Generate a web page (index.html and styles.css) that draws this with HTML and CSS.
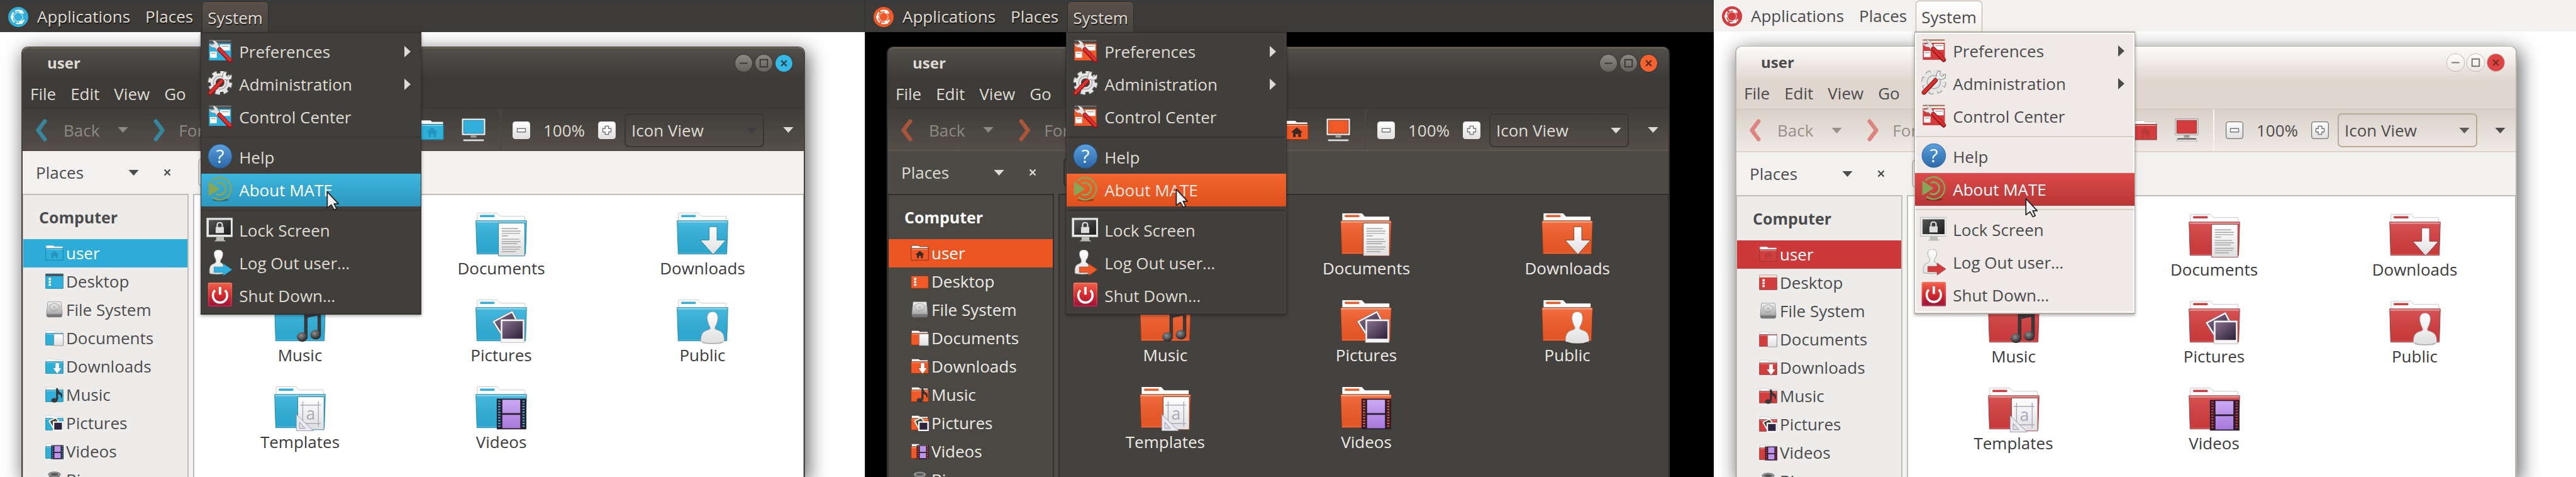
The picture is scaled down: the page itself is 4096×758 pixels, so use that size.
FILE: index.html
```html
<!DOCTYPE html>
<html lang="en">
<head>
<meta charset="utf-8">
<title>MATE desktop themes</title>
<link rel="stylesheet" href="styles.css">
</head>
<body>
<svg class="sprite" aria-hidden="true">
  <defs>
    <linearGradient id="sheen" x1="0" y1="0" x2="0" y2="1"><stop offset="0" stop-color="#fff" stop-opacity=".12"/><stop offset="1" stop-color="#000" stop-opacity=".06"/></linearGradient>
    <linearGradient id="paper" x1="0" y1="0" x2="0" y2="1"><stop offset="0" stop-color="#fff"/><stop offset="1" stop-color="#dfdfdf"/></linearGradient>
    <linearGradient id="photo" x1="0" y1="0" x2="1" y2="1"><stop offset="0" stop-color="#86708c"/><stop offset="1" stop-color="#2d2038"/></linearGradient>
    <linearGradient id="film" x1="0" y1="0" x2="0" y2="1"><stop offset="0" stop-color="#cba9f5"/><stop offset="1" stop-color="#a878dc"/></linearGradient>
    <linearGradient id="blue" x1="0" y1="0" x2="0" y2="1"><stop offset="0" stop-color="#5aa0dc"/><stop offset="1" stop-color="#2a68a8"/></linearGradient>
    <linearGradient id="red" x1="0" y1="0" x2="0" y2="1"><stop offset="0" stop-color="#f0644c"/><stop offset=".5" stop-color="#d9292c"/><stop offset="1" stop-color="#98123a"/></linearGradient>
    <linearGradient id="screen" x1="0" y1="0" x2="1" y2="1"><stop offset="0" stop-color="#555"/><stop offset="1" stop-color="#1c1c1c"/></linearGradient>
    <linearGradient id="metal" x1="0" y1="0" x2="0" y2="1"><stop offset="0" stop-color="#f4f4f4"/><stop offset="1" stop-color="#a8a8a8"/></linearGradient>
    <radialGradient id="ball" cx=".4" cy=".35" r=".6"><stop offset="0" stop-color="#909090"/><stop offset="1" stop-color="#2c2c2c"/></radialGradient>
  </defs>
  <symbol id="logo" viewBox="0 0 36 36">
    <circle cx="18" cy="18" r="18" fill="var(--accent)"/>
    <g fill="none" stroke="#fff"><circle cx="18" cy="18" r="11.5" stroke-width="2.6" stroke-dasharray="17 3 20 3 17 12.2" stroke-dashoffset="-5"/><circle cx="18" cy="18" r="8" stroke-width="1.4" opacity=".7"/></g>
    <g fill="#fff"><circle cx="7" cy="18" r="2.6"/><circle cx="23" cy="8.5" r="3"/><circle cx="23" cy="27.500" r="3"/></g>
  </symbol>
  <symbol id="folder" viewBox="0 0 92 80">
    <path d="M3 16V2Q3 .5 4.500 .5H37Q39 .5 40 2L44 6.500H87Q88.500 6.500 88.500 8V16Z" fill="#fff" stroke="var(--paper-edge)"/>
    <path d="M8 4H34V8H8Z" fill="var(--accent)"/>
    <path d="M.5 14.500H91.500L89.500 74H2.500Z" fill="var(--folder)"/>
    <path d="M.5 14.500H91.500L89.500 74H2.500Z" fill="url(#sheen)" stroke="var(--edge)"/>
    <path d="M1.500 16.500H90.500" stroke="#fff" stroke-opacity=".5" stroke-width="2"/>
    <path d="M3 72.500H89" stroke="#fff" stroke-opacity=".3"/>
  </symbol>
  <symbol id="documents" viewBox="0 0 92 80">
    <use href="#folder"/>
    <path d="M41 18.500H88V77.500H41Z" fill="url(#paper)" stroke="var(--edge)"/>
    <path d="M47 28.500H76M47 33H81M47 37H80M47 41.500H58M47 47.500H78M47 51.500H81M47 55.500H75M47 61.500H81M47 65.500H79M47 69.500H72" stroke="#a4a4a4" stroke-width="1.600"/>
  </symbol>
  <symbol id="downloads" viewBox="0 0 92 80">
    <use href="#folder"/>
    <path d="M58 25H72V49H88L65 75L42 49H58Z" fill="url(#paper)" stroke="var(--edge)"/>
  </symbol>
  <symbol id="music" viewBox="0 0 92 80">
    <use href="#folder"/>
    <path d="M54 20L83 14V62H78V28L59 32V68H54Z" fill="#3a3a3a" stroke="#222" stroke-width=".8"/>
    <ellipse cx="50" cy="67" rx="9.500" ry="8.500" fill="url(#ball)"/><ellipse cx="74" cy="63" rx="9.500" ry="8.500" fill="url(#ball)"/>
  </symbol>
  <symbol id="pictures" viewBox="0 0 92 80">
    <use href="#folder"/>
    <path d="M30 39L66 20L80 46L47 66Z" fill="#fff" stroke="#555" stroke-width=".6"/><path d="M34 40L65 24L76 46L47 60Z" fill="url(#photo)"/>
    <path d="M45 35.500H87.500V77H45Z" fill="#f6f6f6" stroke="#999" stroke-width=".7"/><path d="M48 38.500H84.500V70H48Z" fill="url(#photo)"/>
  </symbol>
  <symbol id="public" viewBox="0 0 92 80">
    <use href="#folder"/>
    <ellipse cx="64" cy="77" rx="19" ry="3" fill="#000" opacity=".25"/>
    <path d="M64 22C75 22 75 34 71 44Q69 48 68 51Q68 54 74 55Q86 58 85 75Q75 79 64 78.500Q53 79 43 75Q42 58 54 55Q60 54 60 51Q59 48 57 44C53 34 53 22 64 22Z" fill="url(#paper)" stroke="#999" stroke-width=".8"/>
  </symbol>
  <symbol id="templates" viewBox="0 0 92 80">
    <use href="#folder"/>
    <path d="M42 18.500H89V77.500H42Z" fill="url(#paper)" stroke="var(--edge)"/>
    <path d="M51 27V72M79 27V72M46 33.500H83M46 66.500H83" stroke="#a9a9bb" stroke-width="1.600"/>
    <text x="65" y="60" text-anchor="middle" class="glyph-a">a</text>
    <path d="M39.500 50V79.500H70ZM45 64L55 75H45Z" fill="#e9e9f0" fill-rule="evenodd" stroke="#8e8ea2"/>
  </symbol>
  <symbol id="videos" viewBox="0 0 92 80">
    <use href="#folder"/>
    <path d="M38 22H91V77H38Z" fill="#2b1d2c"/>
    <path d="M42.500 25V75M86 25V75" stroke="var(--accent)" stroke-width="4" stroke-dasharray="2.500 2.500"/>
    <path d="M48 24H80V48H48ZM48 51H80V75H48Z" fill="url(#film)"/>
  </symbol>
  <symbol id="s-folder" viewBox="0 0 32 28">
    <path d="M1.500 8V1H14L16 3H30.500V8Z" fill="#fff" stroke="var(--paper-edge)" stroke-width=".8"/>
    <path d="M.8 6H31.200V26.500H.8Z" fill="var(--folder)" stroke="var(--edge)"/><path d="M1.500 7.500H30.500" stroke="#fff" stroke-opacity=".5"/>
  </symbol>
  <symbol id="s-home" viewBox="0 0 32 28"><use href="#s-folder"/><path d="M16 10L24 17H21.500V23H18V19H14.500V23H11V17H8Z" fill="var(--home-glyph)"/></symbol>
  <symbol id="s-desktop" viewBox="0 0 32 28"><path d="M.8 1H31.200V26.500H.8Z" fill="var(--folder)" stroke="var(--edge)"/><path d="M.5 1H31.500V5H.5Z" fill="var(--bar)"/><path d="M6 8H10V12H6ZM6 13.500H10V17H6ZM6 18.500H10V22H6Z" fill="#fff"/></symbol>
  <symbol id="s-disk" viewBox="0 0 32 32"><path d="M3 1H29L31.500 24V28Q31 31 28 31H4Q1 31 .5 28V24Z" fill="#777"/><path d="M3 1H29L31.500 25H.5Z" fill="url(#metal)" stroke="#8a8a8a" stroke-width=".8"/><ellipse cx="16" cy="11" rx="10" ry="7" fill="none" stroke="#aaa" stroke-width="1.500"/><circle cx="16" cy="11" r="2.500" fill="#bbb"/><path d="M20 16L12 21" stroke="#aaa" stroke-width="2"/></symbol>
  <symbol id="s-documents" viewBox="0 0 32 28"><use href="#s-folder"/><path d="M15 7H31.500V27.500H15Z" fill="url(#paper)" stroke="#777" stroke-width=".7"/></symbol>
  <symbol id="s-downloads" viewBox="0 0 32 28"><use href="#s-folder"/><path d="M17.500 8H24.500V17H29L21 27.500L13 17H17.500Z" fill="#fff" stroke="var(--edge)" stroke-width=".7"/></symbol>
  <symbol id="s-music" viewBox="0 0 32 28"><use href="#s-folder"/><path d="M19 3L22 3Q23 9 29 12Q31 17 28 21Q28 14 22.500 13V23H19Z" fill="#333"/><ellipse cx="16" cy="24" rx="5.500" ry="4" fill="#3a3a3a"/></symbol>
  <symbol id="s-pictures" viewBox="0 0 32 28"><use href="#s-folder"/><path d="M7 11L18 5L24 12L14 23Z" fill="#443" stroke="#fff" stroke-width="2"/><path d="M14.500 12.500H30.500V27H14.500Z" fill="#2f2440" stroke="#fff" stroke-width="2.500"/></symbol>
  <symbol id="s-videos" viewBox="0 0 32 28"><use href="#s-folder"/><path d="M10.500 3.500H32V28H10.500Z" fill="#2b1d2c"/><path d="M13 5V27M29.700 5V27" stroke="var(--accent)" stroke-width="2" stroke-dasharray="2 2"/><path d="M16 5H27V15H16ZM16 17H27V26H16Z" fill="#bd94ec"/></symbol>
  <symbol id="s-bin" viewBox="0 0 32 32"><path d="M5 5L8 30H24L27 5Z" fill="#777"/><ellipse cx="16" cy="6" rx="12" ry="5" fill="#999" stroke="#666"/><ellipse cx="16" cy="6" rx="8" ry="2.500" fill="#555"/></symbol>
  <symbol id="m-control" viewBox="0 0 48 48">
    <path d="M5 3H45V40H5Z" fill="var(--bar)"/><path d="M5 4H45" stroke="var(--bar-line)" stroke-width="2"/><path d="M5 9H45V40H5Z" fill="var(--accent)"/>
    <path d="M25 11H43V22H25ZM7 24H19V35H7Z" fill="#fff"/><path d="M28 14.500H41M9 27H17" stroke="#999" stroke-width="1.500"/>
    <path d="M11 3Q20 4 22 12L27 19L21 23L16 17Q6 17 5 9L9 12L15 10Z" fill="#e4e4e4" stroke="#777" stroke-width=".7"/>
    <path d="M24 20L43 40" stroke="#8e1212" stroke-width="8" stroke-linecap="round"/><path d="M24 19.500L43 39" stroke="#d93030" stroke-width="5.500" stroke-linecap="round"/>
  </symbol>
  <symbol id="m-admin" viewBox="0 0 48 48">
    <circle cx="25" cy="21" r="18.500" fill="none" stroke="#8b8b8b" stroke-width="8" stroke-dasharray="8.500 6.030"/><circle cx="25" cy="21" r="18" fill="none" stroke="#e6e6e6" stroke-width="6.500" stroke-dasharray="7.500 6.637"/>
    <circle cx="25" cy="21" r="12.500" fill="none" stroke="#e6e6e6" stroke-width="9"/><circle cx="25" cy="21" r="12" fill="none" stroke="#b4b4b4" stroke-width="2"/>
    <path d="M37 1L36 8L40 11L46 6Q48 14 41 16Q37 17 34 15L29 20L25 16L30 10Q29 1 37 1Z" fill="#eee" stroke="#777" stroke-width="1"/>
    <path d="M7 40L28 18" stroke="#8e1212" stroke-width="8" stroke-linecap="round"/><path d="M7 39.500L28 17.500" stroke="#d93030" stroke-width="5.500" stroke-linecap="round"/>
  </symbol>
  <symbol id="m-help" viewBox="0 0 48 48"><circle cx="25" cy="22" r="21.500" fill="url(#blue)" stroke="#2b5f9e"/><text x="25" y="34" text-anchor="middle" class="glyph-q">?</text></symbol>
  <symbol id="m-mate" viewBox="0 0 48 48"><ellipse cx="26" cy="42" rx="15" ry="2.500" fill="#000" opacity=".3"/><g fill="none" stroke="#87a556"><path d="M10 8A20 20 0 1 1 12 37" stroke-width="3"/><path d="M19 12A11 11 0 1 1 18 31" stroke-width="3.500"/></g><path d="M4 8L25 22L4 35Z" fill="#87a556"/></symbol>
  <symbol id="m-lock" viewBox="0 0 48 48"><path d="M18 36H32V41L36 44H14L18 41Z" fill="#bbb"/><path d="M.5 1.500H48V36H.5Z" fill="#e8e8e8" stroke="#aaa" stroke-width=".8"/><path d="M4.500 5H44.500V32H4.500Z" fill="url(#screen)"/><path d="M17 18H32V29H17Z" fill="#ddd"/><path d="M20 19V14Q20 10 24.500 10Q29 10 29 14V19" fill="none" stroke="#ddd" stroke-width="2.500"/></symbol>
  <symbol id="m-logout" viewBox="0 -3 48 48"><path d="M22-3C31-3 32 5 28 13Q25 16 26 20Q34 22 33 40Q20 43 6 40Q4 24 14 22Q19 20 17 14C12 5 13-3 22-3Z" fill="url(#paper)" stroke="#888" stroke-width=".8"/><path d="M14 28H31V22L47 33L31 44V38H14Z" fill="var(--accent)" stroke="var(--edge)" stroke-width=".7"/></symbol>
  <symbol id="m-power" viewBox="0 0 48 48"><rect x="3" y="0" width="44" height="44" rx="3" fill="url(#red)"/><rect x="4.500" y="1.500" width="41" height="41" rx="2" fill="none" stroke="#fff" stroke-opacity=".25"/><path d="M16 14A13 13 0 1 0 34 14" fill="none" stroke="#fff" stroke-width="4"/><path d="M25 8V22" stroke="#fff" stroke-width="4.500"/></symbol>
  <symbol id="t-computer" viewBox="0 0 42 42"><path d="M1 1H41V29H1Z" fill="#f5f5f5" stroke="var(--screen-edge)"/><path d="M3.500 3.500H38.500V26.500H3.500Z" fill="var(--accent)" stroke="var(--edge)"/><path d="M16 29H26V34H16Z" fill="#999"/><path d="M5 35H37L40 40H2Z" fill="#444"/><path d="M3 38.500H39" stroke="#ddd" stroke-width="3"/></symbol>
  <symbol id="t-minus" viewBox="0 0 30 30"><rect x=".7" y=".7" width="28.600" height="28.600" rx="4" fill="url(#paper)" stroke="var(--zoom-edge)" stroke-width="1.400"/><path d="M8 12H22V18H8Z" fill="#fff" stroke="#777" stroke-width="1.500"/></symbol>
  <symbol id="t-plus" viewBox="0 0 30 30"><rect x=".7" y=".7" width="28.600" height="28.600" rx="4" fill="url(#paper)" stroke="var(--zoom-edge)" stroke-width="1.400"/><path d="M12 8H18V12H22V18H18V22H12V18H8V12H12Z" fill="#fff" stroke="#777" stroke-width="1.500"/></symbol>
  <symbol id="t-back" viewBox="0 0 22 40"><path d="M18 4L6 20L18 36" fill="none" stroke="var(--nav)" stroke-width="7" stroke-linecap="round" stroke-linejoin="round"/></symbol>
  <symbol id="t-forward" viewBox="0 0 22 40"><path d="M4 4L16 20L4 36" fill="none" stroke="var(--nav)" stroke-width="7" stroke-linecap="round" stroke-linejoin="round"/></symbol>
  <symbol id="caret" viewBox="0 0 18 10"><path d="M0 0H18L9 10Z" fill="currentColor"/></symbol>
  <symbol id="caret-right" viewBox="0 0 10 18"><path d="M0 0V18L10 9Z" fill="currentColor"/></symbol>
  <symbol id="w-min" viewBox="0 0 28 28"><path d="M7.500 14H20.500" stroke="currentColor" stroke-width="2"/></symbol>
  <symbol id="w-max" viewBox="0 0 28 28"><path d="M8 8H20V20H8Z" fill="none" stroke="currentColor" stroke-width="2"/></symbol>
  <symbol id="w-close" viewBox="0 0 28 28"><path d="M9.500 9.500L18.500 18.500M18.500 9.500L9.500 18.500" stroke="currentColor" stroke-width="2.400"/></symbol>
  <symbol id="cursor" viewBox="0 0 24 36"><path d="M1.500 1.500L22 23.500H14L18.500 32.500L14 34.500L9 25.500L1.500 31Z" fill="#eee" stroke="#222" stroke-width="2" stroke-linejoin="round"/></symbol>
</svg>

<section class="desktop theme-aqua" aria-label="Aqua theme">
  <header class="panel">
    <svg class="logo"><use href="#logo"/></svg>
    <button class="panel-item">Applications</button>
    <button class="panel-item">Places</button>
    <div class="system">
      <button class="panel-item open">System</button>
      <div class="menu">
        <button class="menu-item"><svg><use href="#m-control"/></svg>Preferences<svg class="more"><use href="#caret-right"/></svg></button>
        <button class="menu-item"><svg><use href="#m-admin"/></svg>Administration<svg class="more"><use href="#caret-right"/></svg></button>
        <button class="menu-item"><svg><use href="#m-control"/></svg>Control Center</button>
        <hr>
        <button class="menu-item"><svg><use href="#m-help"/></svg>Help</button>
        <button class="menu-item active"><svg><use href="#m-mate"/></svg>About MATE</button>
        <hr>
        <button class="menu-item"><svg><use href="#m-lock"/></svg>Lock Screen</button>
        <button class="menu-item"><svg><use href="#m-logout"/></svg>Log Out user…</button>
        <button class="menu-item"><svg><use href="#m-power"/></svg>Shut Down…</button>
        <svg class="cursor"><use href="#cursor"/></svg>
      </div>
    </div>
  </header>
  <main class="window">
    <div class="chrome">
      <div class="titlebar">
        <h1>user</h1>
        <button class="win" aria-label="Minimize"><svg><use href="#w-min"/></svg></button>
        <button class="win" aria-label="Maximize"><svg><use href="#w-max"/></svg></button>
        <button class="win close" aria-label="Close"><svg><use href="#w-close"/></svg></button>
      </div>
      <nav class="menubar"><button>File</button><button>Edit</button><button>View</button><button>Go</button><button>Bookmarks</button></nav>
    </div>
    <div class="toolbar">
      <button class="nav" disabled><svg><use href="#t-back"/></svg>Back<svg class="caret"><use href="#caret"/></svg></button>
      <button class="nav" disabled><svg><use href="#t-forward"/></svg>Forward</button>
      <button class="tool home" aria-label="Home"><svg><use href="#s-home"/></svg></button>
      <button class="tool computer" aria-label="Computer"><svg><use href="#t-computer"/></svg></button>
      <div class="zoom">
        <button class="step" aria-label="Zoom out"><svg><use href="#t-minus"/></svg></button>
        <output>100%</output>
        <button class="step" aria-label="Zoom in"><svg><use href="#t-plus"/></svg></button>
      </div>
      <div class="combo"><select aria-label="View mode"><option>Icon View</option></select><svg class="caret"><use href="#caret"/></svg></div>
      <button class="overflow" aria-label="More tools"><svg class="caret"><use href="#caret"/></svg></button>
    </div>
    <div class="columns">
      <aside class="side">
        <div class="side-head"><button class="side-pick">Places<svg class="caret"><use href="#caret"/></svg></button><button class="side-close" aria-label="Close sidebar"><svg><use href="#w-close"/></svg></button></div>
        <div class="side-list">
          <h2>Computer</h2>
          <a href="#" class="place current"><svg><use href="#s-home"/></svg>user</a>
          <a href="#" class="place"><svg><use href="#s-desktop"/></svg>Desktop</a>
          <a href="#" class="place"><svg><use href="#s-disk"/></svg>File System</a>
          <a href="#" class="place"><svg><use href="#s-documents"/></svg>Documents</a>
          <a href="#" class="place"><svg><use href="#s-downloads"/></svg>Downloads</a>
          <a href="#" class="place"><svg><use href="#s-music"/></svg>Music</a>
          <a href="#" class="place"><svg><use href="#s-pictures"/></svg>Pictures</a>
          <a href="#" class="place"><svg><use href="#s-videos"/></svg>Videos</a>
          <a href="#" class="place"><svg><use href="#s-bin"/></svg>Bin</a>
        </div>
      </aside>
      <div class="content">
        <div class="location"><button aria-label="Path"></button></div>
        <div class="files">
          <a href="#" class="file second"><svg><use href="#documents"/></svg>Documents</a>
          <a href="#" class="file"><svg><use href="#downloads"/></svg>Downloads</a>
          <a href="#" class="file"><svg><use href="#music"/></svg>Music</a>
          <a href="#" class="file"><svg><use href="#pictures"/></svg>Pictures</a>
          <a href="#" class="file"><svg><use href="#public"/></svg>Public</a>
          <a href="#" class="file"><svg><use href="#templates"/></svg>Templates</a>
          <a href="#" class="file"><svg><use href="#videos"/></svg>Videos</a>
        </div>
      </div>
    </div>
  </main>
</section>

<section class="desktop theme-orange" aria-label="Orange dark theme">
  <header class="panel">
    <svg class="logo"><use href="#logo"/></svg>
    <button class="panel-item">Applications</button>
    <button class="panel-item">Places</button>
    <div class="system">
      <button class="panel-item open">System</button>
      <div class="menu">
        <button class="menu-item"><svg><use href="#m-control"/></svg>Preferences<svg class="more"><use href="#caret-right"/></svg></button>
        <button class="menu-item"><svg><use href="#m-admin"/></svg>Administration<svg class="more"><use href="#caret-right"/></svg></button>
        <button class="menu-item"><svg><use href="#m-control"/></svg>Control Center</button>
        <hr>
        <button class="menu-item"><svg><use href="#m-help"/></svg>Help</button>
        <button class="menu-item active"><svg><use href="#m-mate"/></svg>About MATE</button>
        <hr>
        <button class="menu-item"><svg><use href="#m-lock"/></svg>Lock Screen</button>
        <button class="menu-item"><svg><use href="#m-logout"/></svg>Log Out user…</button>
        <button class="menu-item"><svg><use href="#m-power"/></svg>Shut Down…</button>
        <svg class="cursor"><use href="#cursor"/></svg>
      </div>
    </div>
  </header>
  <main class="window">
    <div class="chrome">
      <div class="titlebar">
        <h1>user</h1>
        <button class="win" aria-label="Minimize"><svg><use href="#w-min"/></svg></button>
        <button class="win" aria-label="Maximize"><svg><use href="#w-max"/></svg></button>
        <button class="win close" aria-label="Close"><svg><use href="#w-close"/></svg></button>
      </div>
      <nav class="menubar"><button>File</button><button>Edit</button><button>View</button><button>Go</button><button>Bookmarks</button></nav>
    </div>
    <div class="toolbar">
      <button class="nav" disabled><svg><use href="#t-back"/></svg>Back<svg class="caret"><use href="#caret"/></svg></button>
      <button class="nav" disabled><svg><use href="#t-forward"/></svg>Forward</button>
      <button class="tool home" aria-label="Home"><svg><use href="#s-home"/></svg></button>
      <button class="tool computer" aria-label="Computer"><svg><use href="#t-computer"/></svg></button>
      <div class="zoom">
        <button class="step" aria-label="Zoom out"><svg><use href="#t-minus"/></svg></button>
        <output>100%</output>
        <button class="step" aria-label="Zoom in"><svg><use href="#t-plus"/></svg></button>
      </div>
      <div class="combo"><select aria-label="View mode"><option>Icon View</option></select><svg class="caret"><use href="#caret"/></svg></div>
      <button class="overflow" aria-label="More tools"><svg class="caret"><use href="#caret"/></svg></button>
    </div>
    <div class="columns">
      <aside class="side">
        <div class="side-head"><button class="side-pick">Places<svg class="caret"><use href="#caret"/></svg></button><button class="side-close" aria-label="Close sidebar"><svg><use href="#w-close"/></svg></button></div>
        <div class="side-list">
          <h2>Computer</h2>
          <a href="#" class="place current"><svg><use href="#s-home"/></svg>user</a>
          <a href="#" class="place"><svg><use href="#s-desktop"/></svg>Desktop</a>
          <a href="#" class="place"><svg><use href="#s-disk"/></svg>File System</a>
          <a href="#" class="place"><svg><use href="#s-documents"/></svg>Documents</a>
          <a href="#" class="place"><svg><use href="#s-downloads"/></svg>Downloads</a>
          <a href="#" class="place"><svg><use href="#s-music"/></svg>Music</a>
          <a href="#" class="place"><svg><use href="#s-pictures"/></svg>Pictures</a>
          <a href="#" class="place"><svg><use href="#s-videos"/></svg>Videos</a>
          <a href="#" class="place"><svg><use href="#s-bin"/></svg>Bin</a>
        </div>
      </aside>
      <div class="content">
        <div class="location"><button aria-label="Path"></button></div>
        <div class="files">
          <a href="#" class="file second"><svg><use href="#documents"/></svg>Documents</a>
          <a href="#" class="file"><svg><use href="#downloads"/></svg>Downloads</a>
          <a href="#" class="file"><svg><use href="#music"/></svg>Music</a>
          <a href="#" class="file"><svg><use href="#pictures"/></svg>Pictures</a>
          <a href="#" class="file"><svg><use href="#public"/></svg>Public</a>
          <a href="#" class="file"><svg><use href="#templates"/></svg>Templates</a>
          <a href="#" class="file"><svg><use href="#videos"/></svg>Videos</a>
        </div>
      </div>
    </div>
  </main>
</section>

<section class="desktop theme-ruby" aria-label="Ruby light theme">
  <header class="panel">
    <svg class="logo"><use href="#logo"/></svg>
    <button class="panel-item">Applications</button>
    <button class="panel-item">Places</button>
    <div class="system">
      <button class="panel-item open">System</button>
      <div class="menu">
        <button class="menu-item"><svg><use href="#m-control"/></svg>Preferences<svg class="more"><use href="#caret-right"/></svg></button>
        <button class="menu-item"><svg><use href="#m-admin"/></svg>Administration<svg class="more"><use href="#caret-right"/></svg></button>
        <button class="menu-item"><svg><use href="#m-control"/></svg>Control Center</button>
        <hr>
        <button class="menu-item"><svg><use href="#m-help"/></svg>Help</button>
        <button class="menu-item active"><svg><use href="#m-mate"/></svg>About MATE</button>
        <hr>
        <button class="menu-item"><svg><use href="#m-lock"/></svg>Lock Screen</button>
        <button class="menu-item"><svg><use href="#m-logout"/></svg>Log Out user…</button>
        <button class="menu-item"><svg><use href="#m-power"/></svg>Shut Down…</button>
        <svg class="cursor"><use href="#cursor"/></svg>
      </div>
    </div>
  </header>
  <main class="window">
    <div class="chrome">
      <div class="titlebar">
        <h1>user</h1>
        <button class="win" aria-label="Minimize"><svg><use href="#w-min"/></svg></button>
        <button class="win" aria-label="Maximize"><svg><use href="#w-max"/></svg></button>
        <button class="win close" aria-label="Close"><svg><use href="#w-close"/></svg></button>
      </div>
      <nav class="menubar"><button>File</button><button>Edit</button><button>View</button><button>Go</button><button>Bookmarks</button></nav>
    </div>
    <div class="toolbar">
      <button class="nav" disabled><svg><use href="#t-back"/></svg>Back<svg class="caret"><use href="#caret"/></svg></button>
      <button class="nav" disabled><svg><use href="#t-forward"/></svg>Forward</button>
      <button class="tool home" aria-label="Home"><svg><use href="#s-home"/></svg></button>
      <button class="tool computer" aria-label="Computer"><svg><use href="#t-computer"/></svg></button>
      <div class="zoom">
        <button class="step" aria-label="Zoom out"><svg><use href="#t-minus"/></svg></button>
        <output>100%</output>
        <button class="step" aria-label="Zoom in"><svg><use href="#t-plus"/></svg></button>
      </div>
      <div class="combo"><select aria-label="View mode"><option>Icon View</option></select><svg class="caret"><use href="#caret"/></svg></div>
      <button class="overflow" aria-label="More tools"><svg class="caret"><use href="#caret"/></svg></button>
    </div>
    <div class="columns">
      <aside class="side">
        <div class="side-head"><button class="side-pick">Places<svg class="caret"><use href="#caret"/></svg></button><button class="side-close" aria-label="Close sidebar"><svg><use href="#w-close"/></svg></button></div>
        <div class="side-list">
          <h2>Computer</h2>
          <a href="#" class="place current"><svg><use href="#s-home"/></svg>user</a>
          <a href="#" class="place"><svg><use href="#s-desktop"/></svg>Desktop</a>
          <a href="#" class="place"><svg><use href="#s-disk"/></svg>File System</a>
          <a href="#" class="place"><svg><use href="#s-documents"/></svg>Documents</a>
          <a href="#" class="place"><svg><use href="#s-downloads"/></svg>Downloads</a>
          <a href="#" class="place"><svg><use href="#s-music"/></svg>Music</a>
          <a href="#" class="place"><svg><use href="#s-pictures"/></svg>Pictures</a>
          <a href="#" class="place"><svg><use href="#s-videos"/></svg>Videos</a>
          <a href="#" class="place"><svg><use href="#s-bin"/></svg>Bin</a>
        </div>
      </aside>
      <div class="content">
        <div class="location"><button aria-label="Path"></button></div>
        <div class="files">
          <a href="#" class="file second"><svg><use href="#documents"/></svg>Documents</a>
          <a href="#" class="file"><svg><use href="#downloads"/></svg>Downloads</a>
          <a href="#" class="file"><svg><use href="#music"/></svg>Music</a>
          <a href="#" class="file"><svg><use href="#pictures"/></svg>Pictures</a>
          <a href="#" class="file"><svg><use href="#public"/></svg>Public</a>
          <a href="#" class="file"><svg><use href="#templates"/></svg>Templates</a>
          <a href="#" class="file"><svg><use href="#videos"/></svg>Videos</a>
        </div>
      </div>
    </div>
  </main>
</section>
</body>
</html>
```
FILE: styles.css
```css
* { box-sizing: border-box; }

body {
  margin: 0;
  height: 100vh;
  overflow: hidden;
  display: grid;
  grid-template-columns: 1375fr 1350fr 1371fr;
  font-family: "Open Sans", "Noto Sans", sans-serif;
  font-size: 26px;
}

button, select {
  font: inherit;
  color: inherit;
  background: none;
  border: 0;
  margin: 0;
  padding: 0;
}
a { color: inherit; text-decoration: none; }
svg { display: block; flex: none; overflow: visible; }
.sprite { position: absolute; width: 0; height: 0; overflow: hidden; }
.glyph-a { font-size: 30px; fill: #a9a9bb; }
.glyph-q { font-size: 34px; fill: #fff; }

/* Themes */
.theme-aqua {
  --accent: #30b0da; --folder: #2fb0da; --edge: #1b80a0; --paper-edge: #c4c4c4; --screen-edge: #ddd;
  --home-glyph: #2394bb; --bar: #4a5458; --bar-line: #777;
  --desk: #fff; --shadow: 4px 8px 30px 2px rgba(0, 0, 0, .6);
  --panel: #3c3b37; --panel-top: #363b40; --panel-text: #dfdbd2; --text-shadow: 1px 2px 1px #1c1b19;
  --tab: linear-gradient(#5a5049, #474440); --tab-border: #2f2e2b;
  --menu: #413f3b; --menu-border: #34332f; --menu-inner: #413f3b; --menu-text: #dfdbd2; --menu-line: #383733;
  --hot: linear-gradient(#3cb6de, #2d97bd); --hot-text: #fff;
  --frame: #44423e; --frame-top: #6b625b; --title: linear-gradient(#504e49, #3c3b37 50%);
  --tools: linear-gradient(#3f3e3a, #554e49); --tools-line: #45443f; --tools-end: #4b463f;
  --chrome-text: #dfdbd2; --dim: #8d8983; --nav: #38869c; --zoom-edge: #e4e4e4;
  --combo: #393733; --combo-caret: #3d3d42; --sep: #4b4843;
  --head: #f2f1f0; --head-text: #4c4c4c; --side: #edeceb; --side-text: #4c4c4c; --side-title: #4c4c4c;
  --line: #c4bcb7; --pick: #2cacd6; --files: #fff; --file-text: #3c3c3c;
  --win: linear-gradient(#8b8984, #64625d); --win-edge: #383733; --win-text: #3a3936; --close: #35b9e4; --close-text: #274650;
}
.theme-orange {
  --accent: #f05a28; --folder: #f15a26; --edge: #7e3215; --paper-edge: #35332f; --screen-edge: #ddd;
  --home-glyph: #3a2a22; --bar: #4a4843; --bar-line: #77736c;
  --desk: #000; --shadow: none;
  --panel: #3c3b37; --panel-top: #363b40; --panel-text: #dfdbd2; --text-shadow: 1px 2px 1px #1c1b19;
  --tab: linear-gradient(#5a5049, #474440); --tab-border: #2f2e2b;
  --menu: #413f3b; --menu-border: #34332f; --menu-inner: #45433f; --menu-text: #dfdbd2; --menu-line: #32312d;
  --hot: linear-gradient(#f4652f, #df4f1d); --hot-text: #f4e7df;
  --frame: #34332f; --frame-top: #6b625b; --title: linear-gradient(#504e49, #3c3b37 50%);
  --tools: linear-gradient(#3f3e3a, #554e49); --tools-line: #45443f; --tools-end: #625850;
  --chrome-text: #dfdbd2; --dim: #8d8983; --nav: #a8553a; --zoom-edge: #e4e4e4;
  --combo: #393733; --combo-caret: #dfdbd2; --sep: #4b4843;
  --head: #4d4b46; --head-text: #dfdbd2; --side: #4a4843; --side-text: #eceae5; --side-title: #fff;
  --line: #302f2b; --pick: #eb5521; --files: #44423e; --file-text: #eceae5;
  --win: linear-gradient(#8b8984, #64625d); --win-edge: #383733; --win-text: #3a3936; --close: #f4622f; --close-text: #5f2a18;
}
.theme-ruby {
  --accent: #d43b3c; --folder: #d43d3e; --edge: #8e3a3a; --paper-edge: #bcbcbc; --screen-edge: #888;
  --home-glyph: #b83a3a; --bar: #efe8dc; --bar-line: #8f5c4c;
  --desk: #fff; --shadow: 4px 8px 30px 2px rgba(0, 0, 0, .6);
  --panel: #f2f1f0; --panel-top: #f2f1f0; --panel-text: #4c4c4c; --text-shadow: none;
  --tab: linear-gradient(#fff, #f3efec); --tab-border: #b9aa96;
  --menu: #efeae7; --menu-border: #b5aca0; --menu-inner: #fff; --menu-text: #4c4c4c; --menu-line: #d5cec6;
  --hot: linear-gradient(#dc4949, #b73636); --hot-text: #fff;
  --frame: #bab1a8; --frame-top: #fff; --title: linear-gradient(#fbfaf9, #dfd6cf 55%);
  --tools: linear-gradient(#d9d0c8, #efeae6); --tools-line: #d0c6bd; --tools-end: #ddd3c6;
  --chrome-text: #4c4c4c; --dim: #979088; --nav: #dd8380; --zoom-edge: #777;
  --combo: #b9aa98; --combo-caret: #5a5a5a; --sep: #f7f5f2;
  --head: #f2f1f0; --head-text: #4c4c4c; --side: #edeceb; --side-text: #4c4c4c; --side-title: #4c4c4c;
  --line: #c0bcb9; --pick: #cd3838; --files: #fff; --file-text: #3c3c3c;
  --win: linear-gradient(#fefefe, #ece7e3); --win-edge: #c5bbb1; --win-text: #7d7468; --close: #de4346; --close-text: #7c2f22;
}

.desktop {
  display: flex;
  flex-direction: column;
  min-width: 0;
  height: 100vh;
  overflow: hidden;
  background: var(--desk);
}
.theme-orange { border-left: 1px solid #2b3038; }

/* Top panel */
.panel {
  position: relative;
  z-index: 2;
  flex: none;
  display: flex;
  align-items: stretch;
  height: 51px;
  padding-left: 13px;
  color: var(--panel-text);
  background: var(--panel);
  border-top: 2px solid var(--panel-top);
}
.theme-ruby .panel { height: 50px; border-top-width: 1px; }
.logo { width: 32px; height: 32px; align-self: center; margin-right: 2px; }
.panel-item { padding: 0 12px 2px; text-shadow: var(--text-shadow); }
.system { position: relative; display: flex; margin-left: 2px; }
.panel-item.open {
  padding: 1px 8px 0;
  background: var(--tab);
  border: 1px solid var(--tab-border);
  border-bottom: 0;
  border-radius: 6px 6px 0 0;
}

/* System menu */
.menu {
  position: absolute;
  top: 100%;
  left: -2px;
  width: 351px;
  padding: 3px 0 2px;
  color: var(--menu-text);
  background: var(--menu);
  border: 1px solid var(--menu-border);
  border-width: 2px 1px;
  box-shadow: inset 0 0 0 2px var(--menu-inner), 0 2px 5px rgba(0, 0, 0, .35);
}
.menu-item {
  display: flex;
  align-items: center;
  gap: 10px;
  width: 100%;
  height: 52px;
  padding: 0 16px 0 8px;
  text-align: left;
}
.menu-item svg { width: 42px; height: 42px; }
.menu-item .more { width: 10px; height: 18px; margin-left: auto; }
.menu-item.active { color: var(--hot-text); background: var(--hot); }
.menu hr { height: 2px; margin: 5px 1px; border: 0; background: var(--menu-line); }
.menu .cursor { position: absolute; left: 199px; top: 250px; width: 21px; height: 32px; }
.theme-orange .cursor { left: 173px; top: 246px; }
.theme-ruby .cursor { left: 175px; top: 262px; }

/* File manager window */
.window {
  flex: 1;
  display: flex;
  flex-direction: column;
  min-height: 0;
  margin: 23px 95px 0 34px;
  border: 1px solid var(--frame);
  border-width: 1px 2px 0;
  border-radius: 10px 10px 0 0;
  background: var(--head);
  box-shadow: var(--shadow);
}
.theme-orange .window { margin-right: 70px; }
.theme-ruby .window { margin-right: 94px; }
.chrome {
  color: var(--chrome-text);
  background: var(--title);
  border-top: 2px solid var(--frame-top);
  border-radius: 9px 9px 0 0;
}
.titlebar {
  display: flex;
  align-items: center;
  gap: 5px;
  height: 47px;
  padding: 0 18px 0 39px;
}
.titlebar h1 { flex: 1; margin: 0; font-size: 24px; font-weight: 700; line-height: 28px; padding-bottom: 2px; }
.win {
  width: 27px;
  height: 27px;
  border-radius: 50%;
  color: var(--win-text);
  background: var(--win);
  box-shadow: 0 0 0 1px var(--win-edge);
}
.win svg { width: 27px; height: 27px; }
.win.close { color: var(--close-text); background: var(--close); }
.menubar { display: flex; gap: 23px; height: 50px; padding-left: 12px; overflow: hidden; }

.toolbar {
  flex: none;
  display: flex;
  align-items: center;
  height: 66px;
  padding: 0 16px 0 19px;
  color: var(--chrome-text);
  background: var(--tools);
  border-top: 1px solid var(--tools-line);
  border-bottom: 2px solid var(--tools-end);
}
.theme-ruby .toolbar { height: 69px; }
.caret { width: 17px; height: 9px; }
.nav { display: flex; align-items: center; color: var(--dim); margin-right: 40px; }
.nav svg { width: 20px; height: 36px; margin-right: 26px; }
.nav .caret { width: 17px; height: 9px; margin: 0 0 0 29px; }
.nav + .nav svg { margin-right: 20px; }
.tool svg { width: 38px; height: 38px; }
.home { margin-left: auto; }
.home svg { height: 34px; }
.computer { margin: 0 23px 0 28px; }
.zoom {
  display: flex;
  align-items: center;
  align-self: stretch;
  gap: 21px;
  padding: 0 14px 0 18px;
  border-left: 2px solid var(--sep);
}
.step svg { width: 28px; height: 28px; }
.combo { position: relative; width: 222px; margin-right: 30px; }
.theme-ruby .combo { margin-right: 28px; }
.combo select {
  appearance: none;
  width: 100%;
  height: 54px;
  padding: 0 9px;
  border: 2px solid var(--combo);
  border-radius: 7px;
}
.combo .caret { position: absolute; right: 12px; top: 23px; color: var(--combo-caret); pointer-events: none; }

.columns {
  flex: 1;
  min-height: 0;
  display: grid;
  grid-template-columns: 264px minmax(0, 1fr);
  gap: 7px;
}
.side, .content { display: flex; flex-direction: column; min-height: 0; }
.side-head, .location { flex: none; height: 68px; display: flex; align-items: center; }
.side-head { padding-left: 21px; color: var(--head-text); }
.side-pick { display: flex; align-items: center; justify-content: space-between; width: 164px; margin-right: 31px; }
.side-close svg { width: 28px; height: 28px; }
.location { padding-left: 8px; }
.location button { width: 180px; height: 46px; border: 2px solid var(--line); border-radius: 7px; }
.side-list {
  flex: 1;
  min-height: 0;
  overflow: hidden;
  color: var(--side-text);
  background: var(--side);
  border: 2px solid var(--line);
  border-width: 2px 2px 0 1px;
}
.side-list h2 { margin: 0; padding-left: 25px; font-size: 25px; font-weight: 700; line-height: 70px; color: var(--side-title); }
.place { display: flex; align-items: center; gap: 4px; height: 45px; padding: 0 0 1px 35px; }
.place svg { width: 29px; height: 26px; }
.place.current { color: #fff; background: var(--pick); }

.files {
  flex: 1;
  min-height: 0;
  overflow: hidden;
  display: grid;
  grid-template-columns: repeat(3, minmax(0, 1fr));
  grid-auto-rows: 138px;
  padding: 28px 0 0 8px;
  color: var(--file-text);
  background: var(--files);
  border: 2px solid var(--line);
  border-width: 2px 1px 0 2px;
}
.file { display: flex; flex-direction: column; align-items: center; line-height: 34px; }
.file.second { grid-column-start: 2; }
.file svg { width: 82px; height: 71px; }
```
